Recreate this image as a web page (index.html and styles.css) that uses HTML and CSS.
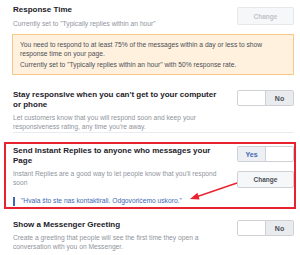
FILE: index.html
```html
<!DOCTYPE html>
<html>
<head>
<meta charset="utf-8">
<link rel="stylesheet" href="styles.css">
</head>
<body>
<div class="page">
  <div class="setting s1">
    <div class="text">
      <div class="title">Response Time</div>
      <div class="desc">Currently set to "Typically replies within an hour"</div>
    </div>
    <div class="controls">
      <button class="btn disabled">Change</button>
    </div>
  </div>
  <div class="notice">
    <p>You need to respond to at least 75% of the messages within a day or less to show response time on your page.</p>
    <p>Currently set to "Typically replies within an hour" with 50% response rate.</p>
  </div>

  <div class="setting s2 ruled">
    <div class="text">
      <div class="title">Stay responsive when you can't get to your computer or phone</div>
      <div class="desc">Let customers know that you will respond soon and keep your responsiveness rating, any time you're away.</div>
    </div>
    <div class="controls">
      <div class="toggle"><span class="half"></span><span class="half on">No</span></div>
    </div>
  </div>

  <div class="highlight">
    <div class="setting s3">
      <div class="text">
        <div class="title">Send Instant Replies to anyone who messages your Page</div>
        <div class="desc">Instant Replies are a good way to let people know that you'll respond soon</div>
      </div>
      <div class="controls stack">
        <div class="toggle"><span class="half on yes">Yes</span><span class="half"></span></div>
        <button class="btn">Change</button>
      </div>
    </div>
    <div class="quote">"Hvala što ste nas kontaktirali. Odgovorićemo uskoro."</div>
    <div class="redbox"></div>
    <svg class="arrow" width="52" height="24" viewBox="0 0 52 24">
      <line x1="49" y1="2" x2="8" y2="16" stroke="#e8232f" stroke-width="1.4"/>
      <polygon points="2,18 9.4,11.8 11.6,18.4" fill="#e8232f"/>
    </svg>
  </div>

  <div class="setting s4">
    <div class="text">
      <div class="title">Show a Messenger Greeting</div>
      <div class="desc">Create a greeting that people will see the first time they open a conversation with you on Messenger.</div>
    </div>
    <div class="controls">
      <div class="toggle"><span class="half"></span><span class="half on">No</span></div>
    </div>
  </div>
</div>
</body>
</html>
```
FILE: styles.css
```css
html, body {
  margin: 0;
  padding: 0;
  background: #fff;
}
.page {
  width: 300px;
  height: 255px;
  overflow: hidden;
  box-sizing: border-box;
  padding: 5px 6px 0 13px;
  font-family: "Liberation Sans", Arial, sans-serif;
  position: relative;
}
.setting {
  display: grid;
  grid-template-columns: 1fr 57px;
  column-gap: 12px;
}
.title {
  font-size: 8px;
  font-weight: bold;
  line-height: 10px;
  color: #1d2129;
}
.desc {
  font-size: 6.7px;
  line-height: 9px;
  color: #90949c;
  margin-top: 3px;
}
.s1 .desc { margin-top: 4px; }
.controls {
  display: flex;
  flex-direction: column;
}
.s1 .controls { padding-top: 2px; }
.stack { gap: 9px; }
.btn {
  width: 57px;
  height: 17px;
  margin: 0;
  padding: 0;
  box-sizing: border-box;
  border: 1px solid #ced0d4;
  border-radius: 2px;
  background: #f6f7f9;
  font-family: "Liberation Sans", Arial, sans-serif;
  font-size: 6.5px;
  font-weight: bold;
  color: #4b4f56;
}
.btn.disabled {
  height: 18px;
  border-color: #e5e7ea;
  background: #f6f7f9;
  color: #bec3c9;
}
.notice {
  margin-top: 6px;
  margin-left: -1px;
  background: #fff1de;
  border: 1px solid #f7c887;
  padding: 5px 8px 5px 7px;
  font-size: 6.7px;
  line-height: 9px;
  color: #4b4f56;
}
.notice p { margin: 0; }
.notice p + p { margin-top: 2px; }
.s2 { margin-top: 15px; }
.ruled {
  padding-bottom: 1px;
  border-bottom: 1px solid #e9ebee;
}
.toggle {
  display: flex;
  width: 57px;
  height: 16px;
  box-sizing: border-box;
  border: 1px solid #ced0d4;
  border-radius: 2px;
  overflow: hidden;
}
.half {
  flex: 1;
  display: flex;
  align-items: center;
  justify-content: center;
  font-size: 7px;
  font-weight: bold;
  color: #4b4f56;
  background: #fff;
}
.half.on {
  background: #e9ebee;
  border-left: 1px solid #ced0d4;
}
.half.yes {
  color: #4267b2;
  border-left: none;
  border-right: 1px solid #ced0d4;
  background: #eceff4;
}
.highlight {
  position: relative;
  margin-top: 13px;
}
.quote {
  margin-top: 9px;
  padding: 0 0 1px 6px;
  border-left: 2px solid #4267b2;
  font-size: 6.7px;
  line-height: 8px;
  color: #4267b2;
  position: relative;
}
.quote::after {
  content: "";
  position: absolute;
  left: -2px;
  right: -1px;
  bottom: -2px;
  border-bottom: 1px solid #e9ebee;
}
.redbox {
  position: absolute;
  left: -9px;
  top: -4px;
  width: 292px;
  height: 67px;
  box-sizing: border-box;
  border: 2px solid #e8232f;
}
.arrow {
  position: absolute;
  left: 175px;
  top: 35px;
}
.s4 { margin-top: 14px; }
```
